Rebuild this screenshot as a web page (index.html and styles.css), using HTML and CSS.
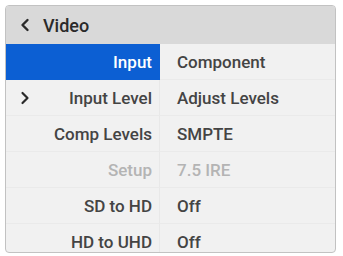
FILE: index.html
```html
<!DOCTYPE html>
<html>
<head>
<meta charset="utf-8">
<link rel="stylesheet" href="styles.css">
</head>
<body>
<div class="panel">
  <div class="header">
    <svg class="chev" width="10" height="14" viewBox="0 0 10 14"><polyline points="7.5,2 2.5,7 7.5,12" fill="none" stroke="#2a2a2a" stroke-width="2.4" stroke-linecap="round" stroke-linejoin="round"/></svg>
    <span class="title">Video</span>
  </div>
  <div class="grid">
    <div class="label sel">Input</div><div class="value">Component</div>
    <div class="label"><svg class="chev-r" width="10" height="14" viewBox="0 0 10 14"><polyline points="2.5,2 7.5,7 2.5,12" fill="none" stroke="#2a2a2a" stroke-width="2.2" stroke-linecap="round" stroke-linejoin="round"/></svg>Input Level</div><div class="value">Adjust Levels</div>
    <div class="label">Comp Levels</div><div class="value">SMPTE</div>
    <div class="label dim">Setup</div><div class="value dim">7.5 IRE</div>
    <div class="label">SD to HD</div><div class="value">Off</div>
    <div class="label">HD to UHD</div><div class="value">Off</div>
  </div>
</div>
</body>
</html>
```
FILE: styles.css
```css
html, body {
  margin: 0;
  padding: 0;
  background: #ffffff;
}
body {
  font-family: Roboto, "Liberation Sans", Arial, sans-serif;
  padding: 5px 0 0 5px;
}
.panel {
  width: 331px;
  height: 248px;
  box-sizing: border-box;
  border: 1px solid #c2c2c2;
  border-radius: 4px;
  background: #f1f1f1;
  overflow: hidden;
}
.header {
  height: 38px;
  background: #d9d9d9;
  display: flex;
  align-items: center;
  padding-left: 14px;
  gap: 13px;
}
.chev { display: block; }
.title {
  font-size: 18px;
  font-weight: 500;
  color: #2a2a2a;
}
.grid {
  display: grid;
  grid-template-columns: 154px 1fr;
  grid-auto-rows: 36px;
}
.label, .value {
  display: flex;
  align-items: center;
  font-size: 17px;
  font-weight: 500;
  color: #444444;
  border-bottom: 1px solid #eaeaea;
  box-sizing: border-box;
}
.label {
  justify-content: flex-end;
  padding-right: 7px;
  position: relative;
  border-right: 1px solid #e8e8e8;
}
.value {
  padding-left: 17px;
}
.sel {
  background: #0c5fd3;
  color: #ffffff;
  border-color: #0c5fd3;
}
.dim {
  color: #b4b4b4;
}
.chev-r {
  position: absolute;
  left: 14px;
  top: 11px;
}
```
